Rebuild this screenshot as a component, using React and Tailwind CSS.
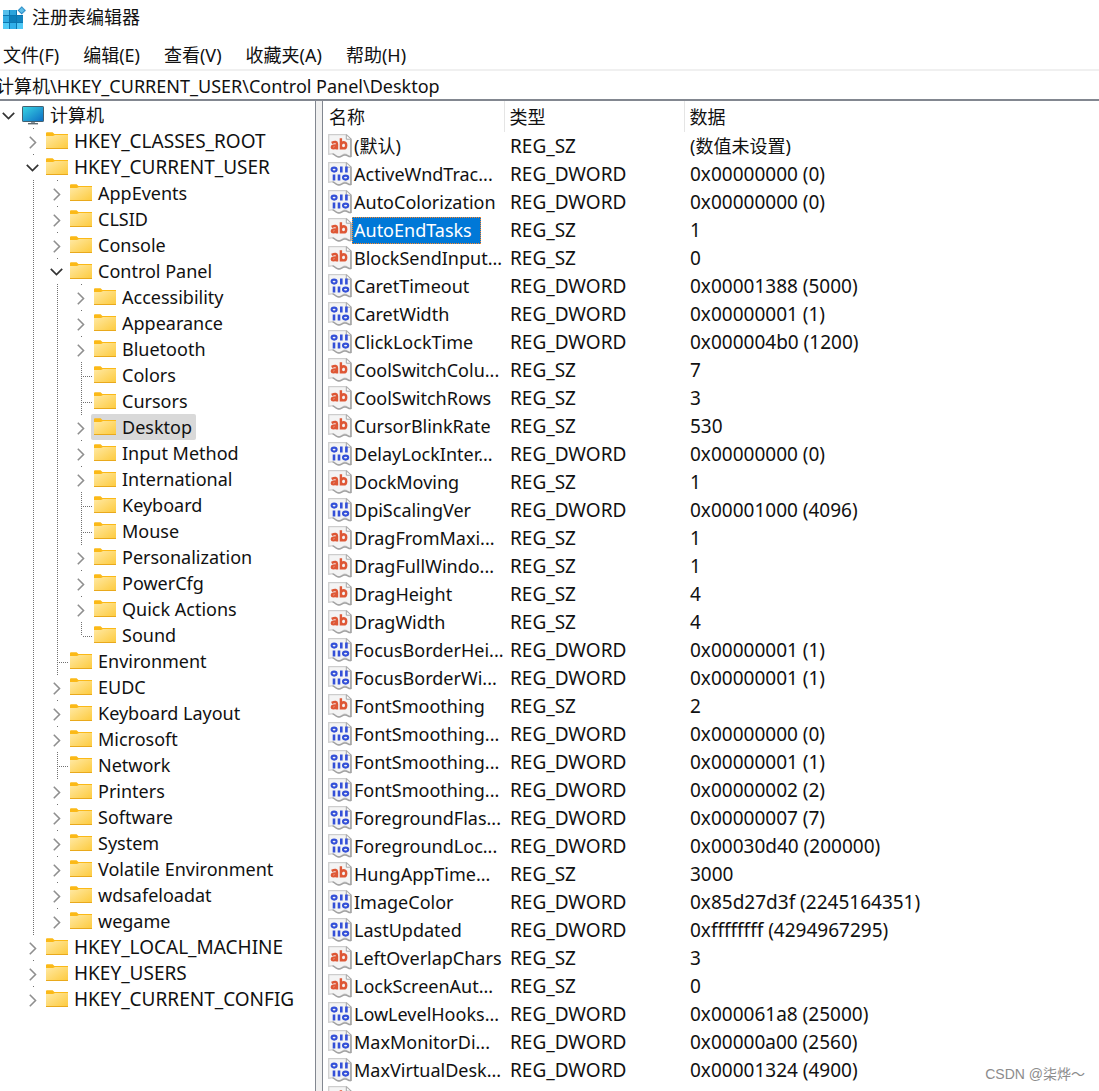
import React from 'react';

const DOTS_V = 'w-px bg-[repeating-linear-gradient(to_bottom,#707070_0px_1px,transparent_1px_2px)]';
const DOTS_H = 'h-px bg-[repeating-linear-gradient(to_right,#707070_0px_1px,transparent_1px_2px)]';

/* [level, name, state]  state: open | closed | leaf | last */
const TREE = [
  [0, '计算机', 'open'],
  [1, 'HKEY_CLASSES_ROOT', 'closed'],
  [1, 'HKEY_CURRENT_USER', 'open'],
  [2, 'AppEvents', 'closed'],
  [2, 'CLSID', 'closed'],
  [2, 'Console', 'closed'],
  [2, 'Control Panel', 'open'],
  [3, 'Accessibility', 'closed'],
  [3, 'Appearance', 'closed'],
  [3, 'Bluetooth', 'closed'],
  [3, 'Colors', 'leaf'],
  [3, 'Cursors', 'leaf'],
  [3, 'Desktop', 'closed'],
  [3, 'Input Method', 'closed'],
  [3, 'International', 'closed'],
  [3, 'Keyboard', 'leaf'],
  [3, 'Mouse', 'leaf'],
  [3, 'Personalization', 'closed'],
  [3, 'PowerCfg', 'closed'],
  [3, 'Quick Actions', 'closed'],
  [3, 'Sound', 'last'],
  [2, 'Environment', 'leaf'],
  [2, 'EUDC', 'closed'],
  [2, 'Keyboard Layout', 'closed'],
  [2, 'Microsoft', 'closed'],
  [2, 'Network', 'leaf'],
  [2, 'Printers', 'closed'],
  [2, 'Software', 'closed'],
  [2, 'System', 'closed'],
  [2, 'Volatile Environment', 'closed'],
  [2, 'wdsafeloadat', 'closed'],
  [2, 'wegame', 'closed'],
  [1, 'HKEY_LOCAL_MACHINE', 'closed'],
  [1, 'HKEY_USERS', 'closed'],
  [1, 'HKEY_CURRENT_CONFIG', 'closed'],
];

const SZ = 'REG_SZ';
const DW = 'REG_DWORD';
const VALUES = [
  ['(默认)', SZ, '(数值未设置)'],
  ['ActiveWndTrac...', DW, '0x00000000 (0)'],
  ['AutoColorization', DW, '0x00000000 (0)'],
  ['AutoEndTasks', SZ, '1'],
  ['BlockSendInput...', SZ, '0'],
  ['CaretTimeout', DW, '0x00001388 (5000)'],
  ['CaretWidth', DW, '0x00000001 (1)'],
  ['ClickLockTime', DW, '0x000004b0 (1200)'],
  ['CoolSwitchColu...', SZ, '7'],
  ['CoolSwitchRows', SZ, '3'],
  ['CursorBlinkRate', SZ, '530'],
  ['DelayLockInter...', DW, '0x00000000 (0)'],
  ['DockMoving', SZ, '1'],
  ['DpiScalingVer', DW, '0x00001000 (4096)'],
  ['DragFromMaxi...', SZ, '1'],
  ['DragFullWindo...', SZ, '1'],
  ['DragHeight', SZ, '4'],
  ['DragWidth', SZ, '4'],
  ['FocusBorderHei...', DW, '0x00000001 (1)'],
  ['FocusBorderWi...', DW, '0x00000001 (1)'],
  ['FontSmoothing', SZ, '2'],
  ['FontSmoothing...', DW, '0x00000000 (0)'],
  ['FontSmoothing...', DW, '0x00000001 (1)'],
  ['FontSmoothing...', DW, '0x00000002 (2)'],
  ['ForegroundFlas...', DW, '0x00000007 (7)'],
  ['ForegroundLoc...', DW, '0x00030d40 (200000)'],
  ['HungAppTime...', SZ, '3000'],
  ['ImageColor', DW, '0x85d27d3f (2245164351)'],
  ['LastUpdated', DW, '0xffffffff (4294967295)'],
  ['LeftOverlapChars', SZ, '3'],
  ['LockScreenAut...', SZ, '0'],
  ['LowLevelHooks...', DW, '0x000061a8 (25000)'],
  ['MaxMonitorDi...', DW, '0x00000a00 (2560)'],
  ['MaxVirtualDesk...', DW, '0x00001324 (4900)'],
  ['', SZ, ''],
];

function AppIcon() {
  const cells = [
    [3, 10, '#55bfeb'], [10, 10, '#2ba4dc'],
    [3, 16, '#2fabe2'], [10, 16, '#0c7fba'], [17, 16, '#1284bf'],
    [3, 23, '#4fcaf7'], [10, 23, '#30b0ea'], [17, 23, '#4ec8f6'],
  ];
  return (
    <svg width="28" height="36" viewBox="0 0 28 36" aria-hidden="true">
      <path d="M3 10H17V15H23V29H3z" fill="#0b76b0" />
      {cells.map(([x, y, fill]) => (
        <rect key={x + '-' + y} x={x} y={y} width="6" height={y === 10 ? 5 : 6} fill={fill} />
      ))}
      <path d="M21.7 6l4.4 4.4-4.4 4.4-4.4-4.4z" fill="#2489c4" stroke="#fff" strokeWidth=".5" />
      <path d="M21.7 7.6l2.8 2.8-2.8 2.6-2.8-2.6z" fill="#5fbde8" />
    </svg>
  );
}

function Monitor() {
  return (
    <svg width="22" height="19" viewBox="0 0 22 19" aria-hidden="true">
      <defs>
        <linearGradient id="screen" x1="0" y1="0" x2="1" y2="1">
          <stop offset="0" stopColor="#3ad5e3" />
          <stop offset="1" stopColor="#0c6cc4" />
        </linearGradient>
      </defs>
      <rect x=".5" y=".5" width="21" height="15" rx=".6" fill="url(#screen)" stroke="#45606f" />
      <rect x="9" y="16" width="4" height="2" fill="#8d989e" />
      <rect x="6" y="17" width="10" height="1.4" fill="#5f6b72" />
    </svg>
  );
}

function Folder() {
  return (
    <svg width="22" height="18" viewBox="0 0 22 18" aria-hidden="true">
      <defs>
        <linearGradient id="folder" x1="0" y1="0" x2="1" y2="1">
          <stop offset="0" stopColor="#ffe9a4" />
          <stop offset="1" stopColor="#fdca3c" />
        </linearGradient>
      </defs>
      <path d="M0 1.2Q0 .3 1 .3H6.6L8.4 2H22V6H0z" fill="#fbb917" />
      <path d="M0 4H7L9 3H22V16.2Q22 17 21 17H1Q0 17 0 16.2z" fill="url(#folder)" />
      <path d="M0 16.5H22" stroke="#e9a91c" />
    </svg>
  );
}

function Chevron({ open }) {
  return open ? (
    <svg className="ml-0.5 mt-[9px] block" width="13" height="8" viewBox="0 0 13 8" fill="none" aria-hidden="true">
      <path d="M.8 .8L6.5 6.5 12.2 .8" stroke="#333" strokeWidth="1.7" />
    </svg>
  ) : (
    <svg className="ml-[5px] mt-[7px] block" width="8" height="13" viewBox="0 0 8 13" fill="none" aria-hidden="true">
      <path d="M.8 .8L6.5 6.5 .8 12.2" stroke="#8f8f8f" strokeWidth="1.6" />
    </svg>
  );
}

function ValueIcon({ type }) {
  return (
    <svg className="shrink-0" width="24" height="24" viewBox="0 0 24 24" fill="none" aria-hidden="true">
      <path d="M.7 .7H18.5L23.2 5V22.4C20.5 23.4 19.4 19.6 16.5 20.2 13.5 20.8 13 23.3 10 22.8 7 22.3 6.5 19.2 3.5 19.8L.7 20.3z" fill="#f4f4f4" stroke="#cdcdcd" strokeWidth="1.2" />
      <path d="M18.3 .8V5.2H23.2z" fill="#fff" stroke="#a5a5a5" strokeWidth="1" />
      <path d="M22.9 5.5V22.4C20.5 23.4 19.4 20.4 16.5 21 13.5 21.6 13 23.4 10 22.8 7.5 22.4 6.5 19.9 4.5 20" stroke="#a3a3a3" strokeWidth="1.5" />
      {type === SZ ? (
        <g stroke="#de5735" strokeWidth="2.4">
          <path d="M3.6 8.8Q9 6.6 9 10V15.4M9 11.6Q3.8 11 3.8 13.2 4 15.4 9 13.4" />
          <path d="M12.9 4.2V15.4M12.9 10.6Q13.8 8.2 15.8 8.2 18.2 8.4 18.2 11.4T15.6 14.4Q13.5 14.3 12.9 12.8" />
        </g>
      ) : (
        <g stroke="#3450d8" strokeWidth="2.1">
          <ellipse cx="6.1" cy="7.6" rx="2.5" ry="2" />
          <path d="M13.3 4.6V10.6M18.4 4.6V10.6M6 12.6V18.6M11 12.6V18.6" strokeWidth="2.6" />
          <ellipse cx="17.6" cy="15.6" rx="2.6" ry="2" />
        </g>
      )}
    </svg>
  );
}

function Guide({ state, level }) {
  if (state === 'leaf' || state === 'last') {
    return (
      <span className="flex h-full w-[22px] pl-[9px]">
        <span className={`${DOTS_V} ${state === 'last' ? 'h-1/2' : 'h-full'}`} />
        <span className={`${DOTS_H} mt-3.5 ml-px w-2.5`} />
      </span>
    );
  }
  return (
    <span className="flex h-full w-[22px] flex-col">
      <span className={`ml-[9px] h-px w-px ${level > 0 ? 'bg-[#707070]' : ''}`} />
      <Chevron open={state === 'open'} />
    </span>
  );
}

function TreeRow({ level, name, state }) {
  const selected = name === 'Desktop';
  return (
    <li role="treeitem" aria-level={level + 1} aria-selected={selected} className="flex h-[26px]">
      {Array.from({ length: level }, (_, i) => (
        <span key={i} className="h-full w-6 shrink-0 pl-[9px]">
          {i > 0 && <span className={`block h-full ${DOTS_V}`} />}
        </span>
      ))}
      <span className="shrink-0">
        <Guide state={state} level={level} />
      </span>
      <button
        type="button"
        className={`-ml-[3px] flex h-full items-center gap-1.5 whitespace-nowrap rounded-xs pr-1 pl-[3px] ${selected ? 'bg-[#d9d9d9]' : ''}`}
      >
        {level === 0 ? <Monitor /> : <Folder />}
        <span className={level === 1 ? 'text-[19px]' : 'text-[18px]'}>{name}</span>
      </button>
    </li>
  );
}

export default function App() {
  return (
    <div className="relative flex h-screen flex-col overflow-hidden bg-white font-['Noto_Sans','Noto_Sans_CJK_SC',sans-serif] text-[18px] leading-[26px] text-[#111]">
      <header className="flex h-9 shrink-0 items-center gap-1">
        <AppIcon />
        <h1 className="pb-0.5">注册表编辑器</h1>
      </header>
      <nav className="flex h-[35px] shrink-0 items-center gap-6 border-b-2 border-[#f0f0f0] pt-1 pl-[3px]">
        {['文件(F)', '编辑(E)', '查看(V)', '收藏夹(A)', '帮助(H)'].map((item) => (
          <button type="button" key={item}>{item}</button>
        ))}
      </nav>
      <input
        aria-label="地址"
        defaultValue="计算机\HKEY_CURRENT_USER\Control Panel\Desktop"
        className="-ml-1 h-[30px] shrink-0 border-b-2 border-[#828790] bg-white outline-none"
      />
      <main className="flex min-h-0 grow">
        <ul role="tree" aria-label="注册表项" className="w-[315px] shrink-0 overflow-hidden pt-px">
          {TREE.map(([level, name, state]) => (
            <TreeRow key={name} level={level} name={name} state={state} />
          ))}
        </ul>
        <div role="separator" className="w-2 shrink-0 border-x border-[#828790] bg-[#f0f0f0]" />
        <div className="min-w-0 grow overflow-hidden pl-[5px]">
          <table className="w-full table-fixed text-left">
            <colgroup>
              <col className="w-[176px]" />
              <col className="w-[180px]" />
              <col />
            </colgroup>
            <thead>
              <tr className="h-[31px]">
                <th className="border-r border-[#e5e5e5] p-0 pl-px font-normal">名称</th>
                <th className="border-r border-[#e5e5e5] p-0 pl-[5px] font-normal">类型</th>
                <th className="p-0 pl-[5px] font-normal">数据</th>
              </tr>
            </thead>
            <tbody>
              {VALUES.map(([name, type, data], i) => (
                <tr key={i} className="h-7 whitespace-nowrap">
                  <td className="p-0">
                    <span className="flex items-center">
                      <ValueIcon type={type} />
                      {name === 'AutoEndTasks' ? (
                        <span className="border border-dotted border-[#ff8728] bg-[#0078d7] pr-2 pl-px leading-[25px] text-white">{name}</span>
                      ) : (
                        <span className="pl-0.5">{name}</span>
                      )}
                    </span>
                  </td>
                  <td className="p-0 pl-1.5 text-[19px]">{name && type}</td>
                  <td className={`p-0 pl-1.5 ${i === 0 ? 'text-[18px]' : 'text-[19px]'}`}>{data}</td>
                </tr>
              ))}
            </tbody>
          </table>
        </div>
      </main>
      <p className="absolute right-3.5 bottom-1 font-['Liberation_Sans','Noto_Sans_CJK_SC',sans-serif] text-[14px] text-[#8c8c8c]">CSDN @柒烨～</p>
    </div>
  );
}
